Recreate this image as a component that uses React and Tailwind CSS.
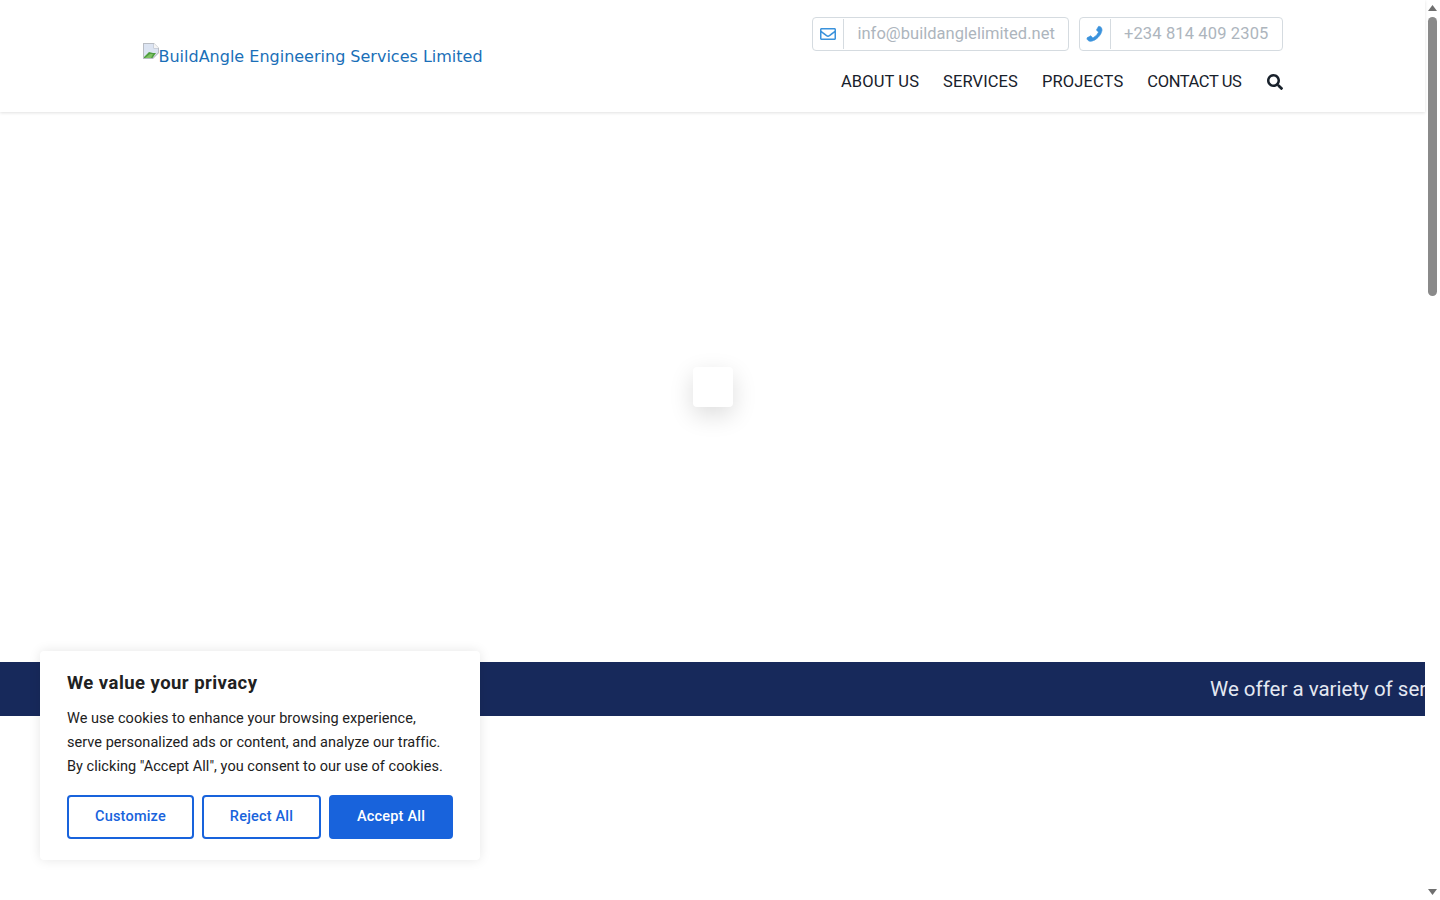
import React from 'react';
import { FaRegEnvelope, FaSearch } from 'react-icons/fa';

const navLinks = [
  { label: 'ABOUT US', className: 'tracking-[0.12px]' },
  { label: 'SERVICES', className: 'tracking-[0.1px]' },
  { label: 'PROJECTS', className: 'tracking-[0.12px]' },
  { label: 'CONTACT US', className: 'tracking-[-0.4px]' },
];

const ContactBox = ({ icon, text, textClass }) => (
  <div className="flex h-[34px] items-center rounded border border-[#d5dbe0] bg-white">
    <div className="flex h-[30px] w-[31px] items-center justify-center border-r border-[#d5dbe0] text-[#3a92dc]">
      {icon}
    </div>
    <span className={`px-[13px] text-[16.5px] leading-[30px] text-[#adb5bd] ${textClass}`}>{text}</span>
  </div>
);

const PhoneIcon = () => (
  <svg width="19" height="19" viewBox="0 0 1792 1792" fill="currentColor" stroke="currentColor" strokeWidth="70" className="-scale-x-100">
    <path d="M1600 1240q0 27-10 70.5t-21 68.5q-21 50-122 106-94 51-186 51-27 0-53-3.5t-57.5-12.5-47-14.5-55.5-20.5-49-18q-98-35-175-83-127-79-264-216t-216-264q-48-77-83-175-3-9-18-49t-20.5-55.5-14.5-47-12.5-57.5-3.5-53q0-92 51-186 56-101 106-122 25-11 68.5-21t70.5-10q14 0 21 3 18 6 53 76 11 19 30 54t35 63.5 31 53.5q3 4 17.5 25t21.5 35.5 7 28.5q0 20-28.5 50t-62 55-62 53-28.5 46q0 9 5 22.5t8.5 20.5 14 24 11.5 19q76 137 174 235t235 174q2 1 19 11.5t24 14 20.5 8.5 22.5 5q18 0 46-28.5t53-62 55-62 50-28.5q14 0 28.5 7t35.5 21.5 25 17.5q25 15 53.5 31t63.5 35 54 30q70 35 76 53 3 7 3 21z" />
  </svg>
);

// browser's broken image placeholder
const BrokenImage = () => (
  <svg width="16" height="16" viewBox="0 0 16 16" className="shrink-0">
    <path d="M0 0h11l5 5v5l-6 6H0z" fill="#b9bdc4" />
    <path d="M1 1h9.5v4.5H15v4L9.5 15H1z" fill="#dce4f2" />
    <path d="M1 15v-1l5-5 4 1 3 0-3.500 5z" fill="#4f9e3f" />
    <path d="M2 15l5-4 3 0-2 4z" fill="#7fc264" />
    <path d="M11 0.500l4.500 4.500H11z" fill="#f5f5f5" />
  </svg>
);

const Header = () => (
  <header className="relative z-10 h-[112px] bg-white shadow-[0_1px_3px_rgba(0,0,0,0.12)]">
    <div className="mx-auto flex h-full w-[1140px] justify-between">
      <a className="mt-[43px] flex h-[27px] items-start text-[16px] leading-[27px] text-[#1a6fb8] font-['DejaVu_Sans',sans-serif]">
        <BrokenImage />
        <span>BuildAngle Engineering Services Limited</span>
      </a>
      <div className="flex flex-col items-end pt-[17px]">
        <div className="flex gap-[10px]">
          <ContactBox icon={<FaRegEnvelope size={16} />} text="info@buildanglelimited.net" textClass="tracking-[0.04px]" />
          <ContactBox icon={<PhoneIcon />} text="+234 814 409 2305" textClass="tracking-[0.14px]" />
        </div>
        <nav className="mt-[19px] flex items-center gap-[24px] text-[16.5px] leading-[24px] text-[#18212b]">
          {navLinks.map((link) => (
            <a key={link.label} className={link.className}>{link.label}</a>
          ))}
          <FaSearch size={16} className="ml-px text-[#18212b]" />
        </nav>
      </div>
    </div>
  </header>
);

const CookieBanner = () => (
  <div className="absolute left-[40px] top-[651px] z-20 h-[209px] w-[440px] rounded bg-white px-[27px] pt-[21px] shadow-[0_0_12px_rgba(0,0,0,0.1)]">
    <h2 className="text-[18.5px] leading-[22px] font-bold tracking-[0.45px] text-[#212121]">We value your privacy</h2>
    <p className="mt-[13px] whitespace-nowrap text-[14.5px] leading-[24px] tracking-[0.04px] text-[#212121]">
      We use cookies to enhance your browsing experience,
      <br />
      serve personalized ads or content, and analyze our traffic.
      <br />
      By clicking "Accept All", you consent to our use of cookies.
    </p>
    <div className="mt-[16px] flex gap-[8px] text-[14.5px] font-medium tracking-[0.2px]">
      <button className="h-[44px] w-[127px] rounded-sm border-2 border-[#1863dc] text-[#1863dc]">Customize</button>
      <button className="h-[44px] w-[119px] rounded-sm border-2 border-[#1863dc] text-[#1863dc]">Reject All</button>
      <button className="h-[44px] w-[124px] rounded-sm border-2 border-[#1863dc] bg-[#1863dc] text-white">Accept All</button>
    </div>
  </div>
);

const Scrollbar = () => (
  <div className="flex h-[900px] w-[15px] shrink-0 flex-col items-center bg-white">
    <svg width="9" height="6" viewBox="0 0 9 6" className="mt-[5px]">
      <path d="M4.5 0L9 6H0z" fill="#6f6f6f" />
    </svg>
    <div className="mt-[6px] h-[279px] w-[9px] rounded-full bg-[#8a8a8a]" />
    <svg width="9" height="6" viewBox="0 0 9 6" className="mt-auto mb-[5px]">
      <path d="M0 0h9L4.5 6z" fill="#6f6f6f" />
    </svg>
  </div>
);

export default function App() {
  return (
    <div className="relative flex h-[900px] overflow-hidden bg-white font-['Roboto',sans-serif]">
      <main className="min-w-0 flex-1">
        <Header />
        {/* loader */}
        <section className="flex h-[550px] items-center justify-center">
          <div className="h-[40px] w-[40px] rounded-sm bg-white shadow-[0_8px_24px_rgba(0,0,0,0.14)]" />
        </section>
        {/* ticker */}
        <div className="flex h-[54px] items-center overflow-hidden bg-[#17295b]">
          <span className="whitespace-nowrap pl-[1210px] text-[20.5px] font-[450] text-[#e4e8f2]">
            We offer a variety of services
          </span>
        </div>
      </main>
      <Scrollbar />
      <CookieBanner />
    </div>
  );
}
